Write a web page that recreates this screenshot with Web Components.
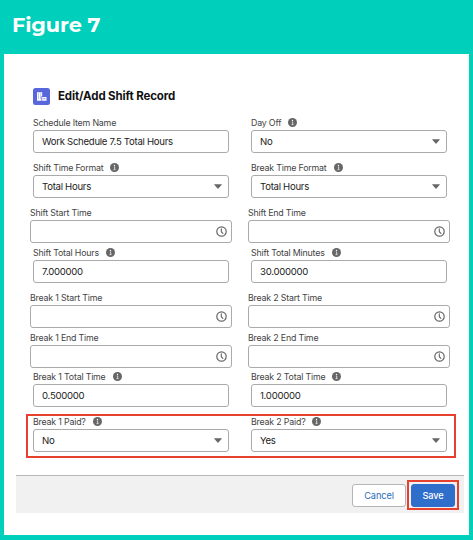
<!DOCTYPE html>
<html lang="en">
<head>
<meta charset="utf-8">
<title>Figure 7</title>
<style>
    body {
        margin: 0;
        font-family: Inter, "Liberation Sans", sans-serif;
        color: #222;
    }
</style>
</head>
<body>
<figure-frame caption="Figure 7">
    <shift-dialog heading="Edit/Add Shift Record">
        <field-row style="height: 45px">
            <form-field label="Schedule Item Name" value="Work Schedule 7.5 Total Hours"></form-field>
            <form-field label="Day Off" value="No" kind="select" info></form-field>
        </field-row>
        <field-row style="height: 45px">
            <form-field label="Shift Time Format" value="Total Hours" kind="select" info></form-field>
            <form-field label="Break Time Format" value="Total Hours" kind="select" info></form-field>
        </field-row>
        <field-row style="height: 40px" wide>
            <form-field label="Shift Start Time" kind="time"></form-field>
            <form-field label="Shift End Time" kind="time"></form-field>
        </field-row>
        <field-row style="height: 45px">
            <form-field label="Shift Total Hours" value="7.000000" info></form-field>
            <form-field label="Shift Total Minutes" value="30.000000" info></form-field>
        </field-row>
        <field-row style="height: 40px" wide>
            <form-field label="Break 1 Start Time" kind="time"></form-field>
            <form-field label="Break 2 Start Time" kind="time"></form-field>
        </field-row>
        <field-row style="height: 39px" wide>
            <form-field label="Break 1 End Time" kind="time"></form-field>
            <form-field label="Break 2 End Time" kind="time"></form-field>
        </field-row>
        <field-row style="height: 45px">
            <form-field label="Break 1 Total Time" value="0.500000" info></form-field>
            <form-field label="Break 2 Total Time" value="1.000000" info></form-field>
        </field-row>
        <field-row style="height: 44px" marked>
            <form-field label="Break 1 Paid?" value="No" kind="select" info></form-field>
            <form-field label="Break 2 Paid?" value="Yes" kind="select" info></form-field>
        </field-row>
        <dialog-button slot="footer">Cancel</dialog-button>
        <dialog-button slot="footer" primary>Save</dialog-button>
    </shift-dialog>
</figure-frame>

<script>
class FigureFrame extends HTMLElement {
    connectedCallback() {
        const shadow = this.attachShadow({mode: 'open'});
        shadow.innerHTML = `
        <style>
        :host {
            display: flex;
            flex-direction: column;
            box-sizing: border-box;
            width: 473px;
            height: 540px;
            padding: 0 4px 5px;
            background: #00cfbb;
        }
        header {
            height: 54px;
            box-sizing: border-box;
            padding: 11px 0 0 8px;
            font: 700 20.8px/28px Montserrat, Inter, sans-serif;
            letter-spacing: -0.1px;
            color: #fff;
        }
        main {
            flex: 1;
            background: #fff;
        }
        </style>
        <header>${this.getAttribute('caption')}</header>
        <main><slot></slot></main>`;
    }
}

class ShiftDialog extends HTMLElement {
    connectedCallback() {
        const shadow = this.attachShadow({mode: 'open'});
        shadow.innerHTML = `
        <style>
        :host {
            display: block;
            padding: 33px 5px 0 12px;
        }
        .heading {
            display: flex;
            align-items: center;
            gap: 8px;
            height: 18px;
            margin: 0 0 10px 17px;
            font-size: 11.5px;
            font-weight: 700;
            letter-spacing: -0.13px;
            color: #111;
        }
        .heading svg {
            display: block;
        }
        .fields {
            height: 360px;
            padding-left: 17px;
        }
        footer {
            display: flex;
            align-items: flex-start;
            justify-content: flex-end;
            gap: 1px;
            box-sizing: border-box;
            height: 38px;
            padding: 4px 5px 0 0;
            border-top: 1px solid #b8b8b8;
            background: #f1f1f1;
        }
        </style>
        <div class="heading">
            <svg width="17" height="17" viewBox="0 0 17 17">
                <rect width="17" height="17" rx="2.5" fill="#5867db"/>
                <path fill="#fff" d="M4 4.2h5.2v4H8.4v4.6H4z M9.2 9h4.3v3.8H9.2z"/>
                <path stroke="#5867db" stroke-width=".7" d="M5 6h1M7.2 6h1M5 8h1M7.2 8h1M5 10h1M7 10h1M10.2 10.7h2.3"/>
            </svg>
            <span>${this.getAttribute('heading')}</span>
        </div>
        <div class="fields"><slot></slot></div>
        <footer><slot name="footer"></slot></footer>`;
    }
}

class FieldRow extends HTMLElement {
    connectedCallback() {
        const shadow = this.attachShadow({mode: 'open'});
        shadow.innerHTML = `
        <style>
        :host {
            display: grid;
            grid-template-columns: 196px 196px;
            column-gap: 22px;
            box-sizing: border-box;
        }
        :host([wide]) {
            grid-template-columns: 202px 202px;
            column-gap: 16px;
            margin-left: -3px;
        }
        /* frame drawn around the row */
        :host([marked]) {
            width: 430px;
            margin-left: -7px;
            padding-left: 5px;
            border: 2px solid #e8402f;
        }
        :host([marked]) ::slotted(*) {
            margin-top: -2px;
        }
        </style>
        <slot></slot>`;
    }
}

class FormField extends HTMLElement {
    connectedCallback() {
        const kind = this.getAttribute('kind');
        let icon = '';
        if (kind === 'select') {
            icon = '<svg class="arrow" width="8" height="5" viewBox="0 0 8 5"><path fill="#666" d="M.5 .2h7q.5 0 .2.5L4.4 4.6q-.4.4-.8 0L.3.7Q0 .2.5.2z"/></svg>';
        } else if (kind === 'time') {
            icon = `<svg width="11" height="11" viewBox="0 0 11 11" fill="none" stroke="#666" stroke-linecap="round">
                <circle cx="5.5" cy="5.5" r="4.7" stroke-width="1.2"/>
                <path d="M5.3 2.9v2.8l1.6 1.6" stroke-width="1.1"/></svg>`;
        }
        const info = this.hasAttribute('info') ? `
            <svg width="9" height="9" viewBox="0 0 9 9">
                <circle cx="4.5" cy="4.5" r="4.5" fill="#666"/>
                <circle cx="4.5" cy="2.5" r=".7" fill="#fff"/>
                <path d="M3.8 4h.9v2.5M3.5 6.6h2" fill="none" stroke="#fff" stroke-width=".7"/>
            </svg>` : '';
        const shadow = this.attachShadow({mode: 'open'});
        shadow.innerHTML = `
        <style>
        :host {
            display: block;
        }
        svg {
            display: block;
            flex: none;
        }
        .label {
            display: flex;
            align-items: center;
            gap: 7px;
            height: 15px;
            font-size: 8.8px;
            line-height: 15px;
            letter-spacing: -0.18px;
            color: #444;
            white-space: nowrap;
        }
        .box {
            display: flex;
            align-items: center;
            justify-content: space-between;
            box-sizing: border-box;
            height: 23px;
            padding: 0 ${kind === 'time' ? 4 : 6}px 0 8px;
            border: 1px solid #aaa;
            border-radius: 3px;
            background: #fff;
            font-size: 9.6px;
            letter-spacing: -0.28px;
            color: #222;
            white-space: nowrap;
        }
        </style>
        <div class="label"><span>${this.getAttribute('label')}</span>${info}</div>
        <div class="box"><span>${this.getAttribute('value') || ''}</span>${icon}</div>`;
    }
}

class DialogButton extends HTMLElement {
    connectedCallback() {
        const shadow = this.attachShadow({mode: 'open'});
        shadow.innerHTML = `
        <style>
        :host {
            display: block;
            margin-top: 4px;
        }
        button {
            display: block;
            box-sizing: border-box;
            width: 54px;
            height: 23px;
            padding: 0;
            border: 1px solid #b5b5b5;
            border-radius: 3px;
            background: #fff;
            color: #2b6cb8;
            font: 400 9.2px Inter, sans-serif;
            letter-spacing: -0.1px;
        }
        /* the primary button carries the red frame */
        :host([primary]) {
            margin-top: 0;
            padding: 2px 2px 1px;
            border: 2px solid #e8402f;
        }
        :host([primary]) button {
            width: 44px;
            border-color: #2f6ecb;
            background: #2f6ecb;
            color: #fff;
            font-weight: 500;
        }
        </style>
        <button><slot></slot></button>`;
    }
}

customElements.define('figure-frame', FigureFrame);
customElements.define('shift-dialog', ShiftDialog);
customElements.define('field-row', FieldRow);
customElements.define('form-field', FormField);
customElements.define('dialog-button', DialogButton);
</script>
</body>
</html>
